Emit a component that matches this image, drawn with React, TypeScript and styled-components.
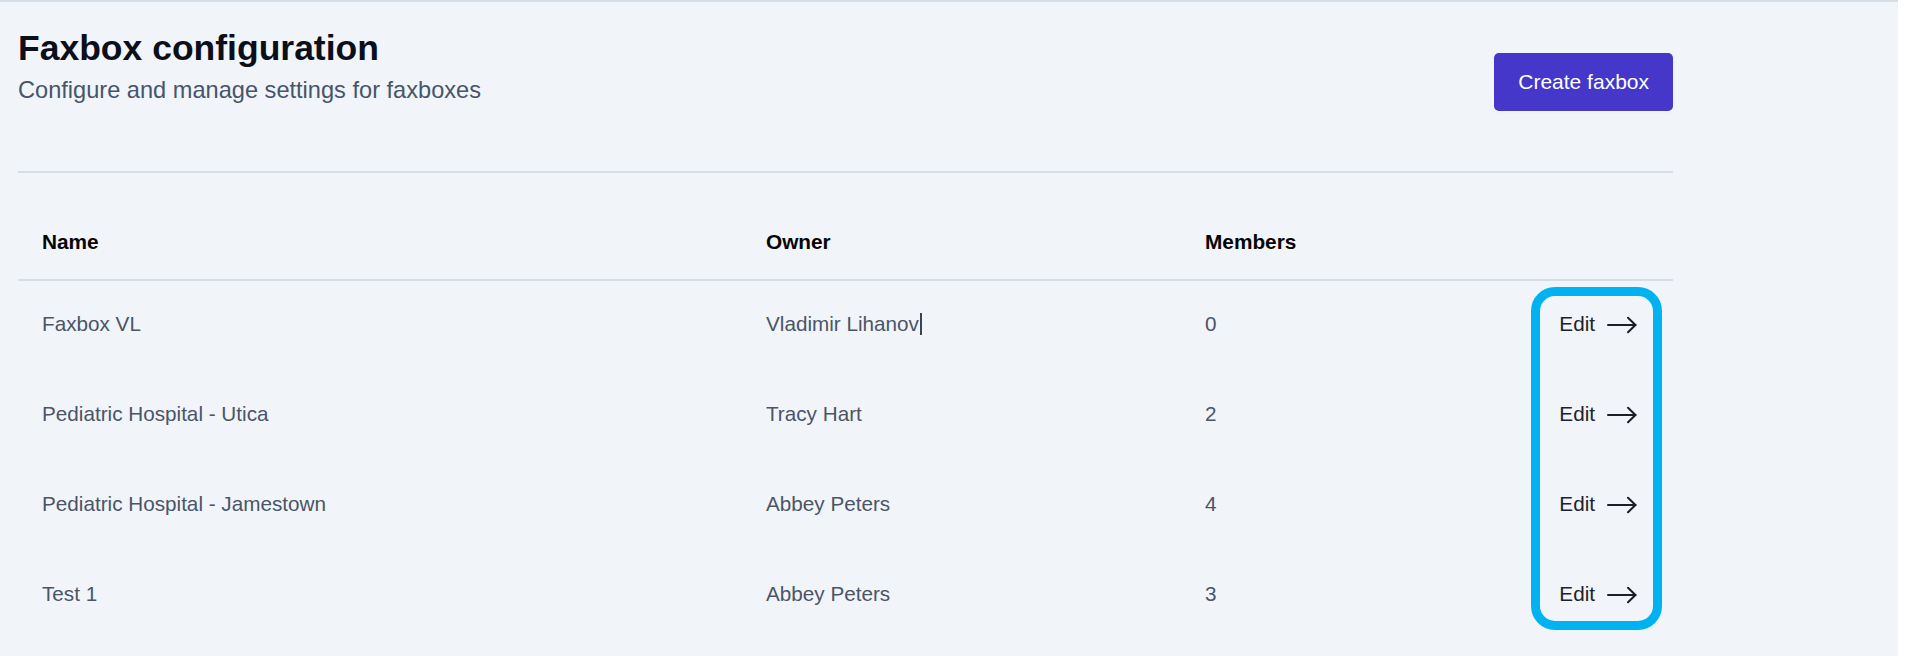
import { createGlobalStyle, styled } from 'styled-components';

const GlobalStyle = createGlobalStyle`
    html, body {
        margin: 0;
        padding: 0;
        background: #ffffff;
    }
    body {
        font-family: "Liberation Sans", Arial, sans-serif;
    }
`

type Faxbox = {
    name: string;
    owner: string;
    members: number;
    editing?: boolean;
}

const faxboxes: Faxbox[] = [
    { name: 'Faxbox VL', owner: 'Vladimir Lihanov', members: 0, editing: true },
    { name: 'Pediatric Hospital - Utica', owner: 'Tracy Hart', members: 2 },
    { name: 'Pediatric Hospital - Jamestown', owner: 'Abbey Peters', members: 4 },
    { name: 'Test 1', owner: 'Abbey Peters', members: 3 },
]

function ArrowRight () {
    return (
        <svg width="30" height="18" viewBox="0 0 30 18" fill="none">
            <path d="M1 9H28.5" stroke="#1c1f26" strokeWidth="2" strokeLinecap="round" />
            <path d="M21 1.8L28.5 9L21 16.2" stroke="#1c1f26" strokeWidth="2" strokeLinecap="round" strokeLinejoin="round" />
        </svg>
    )
}

function App () {
    return (
        <>
            <GlobalStyle />
            <Page>
                <Header>
                    <TitleBlock>
                        <Title>Faxbox configuration</Title>
                        <Subtitle>Configure and manage settings for faxboxes</Subtitle>
                    </TitleBlock>
                    <CreateButton type="button">Create faxbox</CreateButton>
                </Header>
                <Divider />
                <TableWrap>
                    <Table>
                        <thead>
                            <tr>
                                <Th $width={724}>Name</Th>
                                <Th $width={439}>Owner</Th>
                                <Th>Members</Th>
                                <Th $width={200}></Th>
                            </tr>
                        </thead>
                        <tbody>
                            {faxboxes.map((item, index) => (
                                <tr key={index}>
                                    <Td>{item.name}</Td>
                                    <Td>
                                        {item.owner}
                                        {item.editing && <Caret />}
                                    </Td>
                                    <Td>{item.members}</Td>
                                    <ActionTd>
                                        <EditLink href="#">
                                            Edit
                                            <ArrowRight />
                                        </EditLink>
                                    </ActionTd>
                                </tr>
                            ))}
                        </tbody>
                    </Table>
                    {/* 편집 버튼 영역 강조 표시 */}
                    <Highlight />
                </TableWrap>
            </Page>
        </>
    )
}

const Page = styled.div`
    width: 1898px;
    min-height: 100vh;
    padding: 24px 0 0 18px;
    box-sizing: border-box;
    background: #f1f4f9;
    border-top: 2px solid #d5dde7;
`
const Header = styled.div`
    width: 1655px;
    display: flex;
    justify-content: space-between;
    align-items: flex-start;
`
const TitleBlock = styled.div`
    display: flex;
    flex-direction: column;
    gap: 4px;
`
const Title = styled.h1`
    margin: 0;
    font-size: 35.5px;
    line-height: 44px;
    font-weight: 700;
    color: #0b0f19;
`
const Subtitle = styled.p`
    margin: 0;
    font-size: 23.6px;
    line-height: 32px;
    color: #475569;
`
const CreateButton = styled.button`
    margin-top: 27px;
    height: 58px;
    padding: 0 24px;
    border: 0;
    border-radius: 5px;
    background-color: #4437c9;
    color: #ffffff;
    font-family: inherit;
    font-size: 21px;
    cursor: pointer;
`
const Divider = styled.div`
    width: 1655px;
    margin-top: 60px;
    border-top: 2px solid #d6dde6;
`
const TableWrap = styled.div`
    width: 1655px;
    margin-top: 32px;
    position: relative;
`
const Table = styled.table`
    width: 100%;
    table-layout: fixed;
    border-collapse: collapse;
`
const Th = styled.th<{ $width?: number }>`
    box-sizing: border-box;
    width: ${({ $width }) => ($width ? `${$width}px` : 'auto')};
    padding: 22px 24px;
    border-bottom: 2px solid #d6dde6;
    text-align: left;
    font-size: 20.8px;
    line-height: 30px;
    font-weight: 700;
    color: #050505;
`
const Td = styled.td`
    padding: 28px 24px 32px;
    font-size: 20.7px;
    line-height: 30px;
    color: #4b5567;
    white-space: nowrap;
`
const ActionTd = styled(Td)`
    padding-right: 36px;
    text-align: right;
`
const EditLink = styled.a`
    display: inline-flex;
    align-items: center;
    gap: 12px;
    color: #1e222b;
    text-decoration: none;
    svg {
        margin-top: 2px;
    }
`
const Caret = styled.span`
    display: inline-block;
    width: 0;
    height: 22px;
    margin-left: 1px;
    border-left: 2px solid #3c4454;
    vertical-align: -4px;
`
const Highlight = styled.div`
    position: absolute;
    left: 1513px;
    top: 82px;
    width: 131px;
    height: 343px;
    box-sizing: border-box;
    border: 9px solid #00b2ef;
    border-radius: 24px;
    pointer-events: none;
`

export default App;
